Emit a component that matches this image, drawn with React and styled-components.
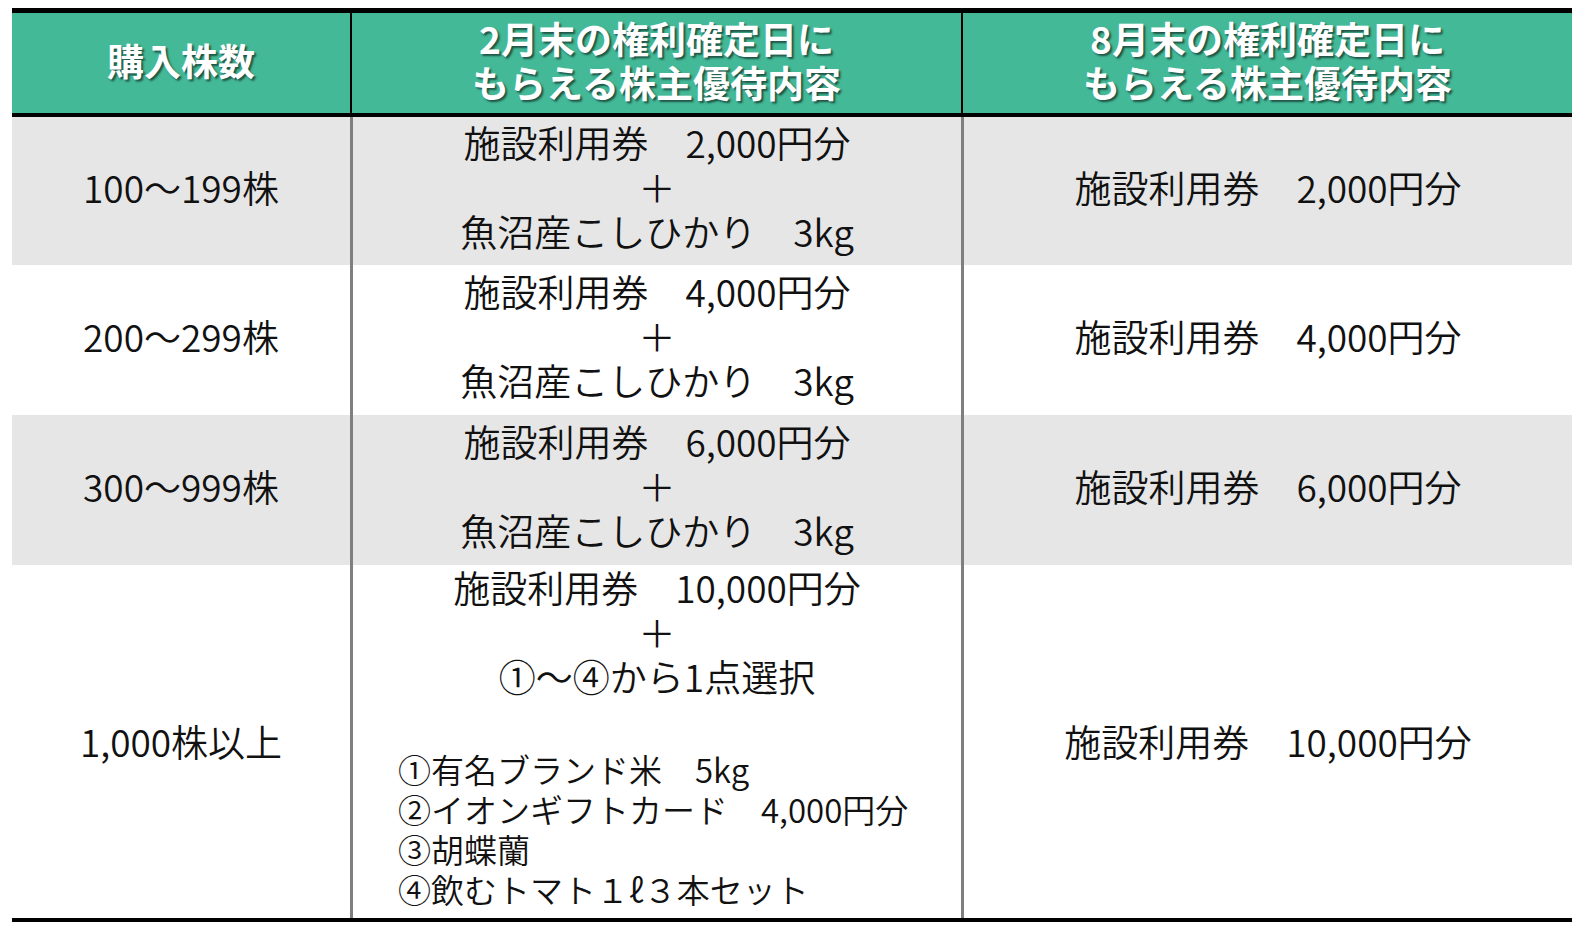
import React from 'react';
import styled, { createGlobalStyle } from 'styled-components';

const GlobalStyle = createGlobalStyle`
    html, body {
        margin: 0;
        padding: 0;
        background: #ffffff;
    }
    body {
        font-family: "Noto Sans CJK JP", "Noto Sans", sans-serif;
        color: #111111;
    }
`;

const Page = styled.div`
    width: 1584px;
    height: 938px;
    padding: 8px 12px 0 12px;
    box-sizing: border-box;
`;

const Table = styled.div`
    width: 1560px;
    display: grid;
    grid-template-columns: 338px 611px 611px;
    border-top: 5px solid #000;
    border-bottom: 4px solid #000;
`;

const HeadCell = styled.div`
    height: 104px;
    padding-bottom: 6px;
    background: #43b997;
    border-bottom: 4px solid #000;
    border-left: ${p => (p.first ? 'none' : '2px solid #000')};
    display: flex;
    flex-direction: column;
    align-items: center;
    justify-content: center;
    color: #ffffff;
    font-weight: 700;
    font-size: 37px;
    line-height: 44px;
    text-shadow: 2px 2px 2px rgba(0, 0, 0, 0.55);
    box-sizing: border-box;
`;

const Cell = styled.div`
    height: ${p => p.h}px;
    padding-bottom: ${p => (p.tall ? 0 : 8)}px;
    background: ${p => (p.shade ? '#e6e6e6' : '#ffffff')};
    border-left: ${p => (p.first ? 'none' : '3px solid #7f7f7f')};
    display: flex;
    flex-direction: column;
    align-items: center;
    justify-content: center;
    font-size: 37px;
    font-weight: 350;
    line-height: 44.5px;
    box-sizing: border-box;
    white-space: pre;
`;

const BigCell = styled(Cell)`
    justify-content: flex-start;
    align-items: stretch;
    padding-top: 0;
    padding-bottom: 0;
`;

const Line = styled.div`
    text-align: center;
`;

const Circled = styled.span`
    font-variant-east-asian: full-width;
    font-feature-settings: "fwid" 1;
`;

const ChoiceList = styled.div`
    margin-top: 50px;
    padding-left: 45px;
    font-size: 33px;
    line-height: 40px;
    text-align: left;
`;

const rows = [
    { shares: '100〜199株', amount: '2,000' },
    { shares: '200〜299株', amount: '4,000' },
    { shares: '300〜999株', amount: '6,000' },
];

const choices = [
    ['①', '有名ブランド米　5kg'],
    ['②', 'イオンギフトカード　4,000円分'],
    ['③', '胡蝶蘭'],
    ['④', '飲むトマト１ℓ３本セット'],
];

export default function App() {
    return (
        <Page>
            <GlobalStyle />
            <Table>
                <HeadCell first>
                    <div>購入株数</div>
                </HeadCell>
                <HeadCell>
                    <div>2月末の権利確定日に</div>
                    <div>もらえる株主優待内容</div>
                </HeadCell>
                <HeadCell>
                    <div>8月末の権利確定日に</div>
                    <div>もらえる株主優待内容</div>
                </HeadCell>

                {rows.map((r, i) => {
                    const shade = i % 2 === 0;
                    const h = i === 0 ? 148 : 150;
                    return (
                        <React.Fragment key={r.shares}>
                            <Cell first shade={shade} h={h}>{r.shares}</Cell>
                            <Cell shade={shade} h={h}>
                                <Line>施設利用券　{r.amount}円分</Line>
                                <Line>＋</Line>
                                <Line>魚沼産こしひかり　3kg</Line>
                            </Cell>
                            <Cell shade={shade} h={h}>施設利用券　{r.amount}円分</Cell>
                        </React.Fragment>
                    );
                })}

                <Cell first tall h={353}>1,000株以上</Cell>
                <BigCell h={353}>
                    <Line>施設利用券　10,000円分</Line>
                    <Line>＋</Line>
                    <Line><Circled>①</Circled>〜<Circled>④</Circled>から1点選択</Line>
                    <ChoiceList>
                        {choices.map(([num, text]) => (
                            <div key={num}><Circled>{num}</Circled>{text}</div>
                        ))}
                    </ChoiceList>
                </BigCell>
                <Cell tall h={353}>施設利用券　10,000円分</Cell>
            </Table>
        </Page>
    );
}
